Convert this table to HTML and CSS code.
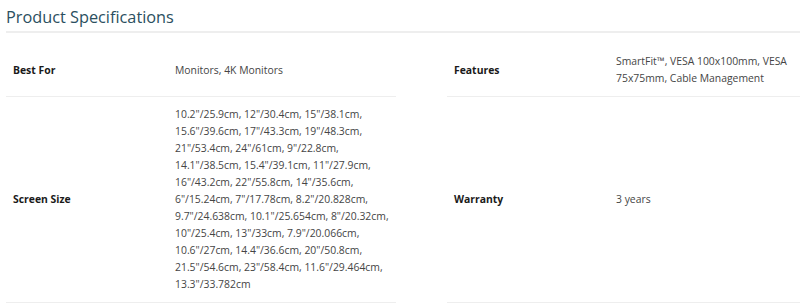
FILE: index.html
```html
<!DOCTYPE html>
<html lang="en">
<head>
<meta charset="utf-8">
<title>Product Specifications</title>
<link rel="stylesheet" href="styles.css">
</head>
<body>
<section class="specs">
  <h2 class="specs-title">Product Specifications</h2>
  <div class="specs-grid">
    <div class="spec">
      <div class="spec-label">Best For</div>
      <div class="spec-value">Monitors, 4K Monitors</div>
    </div>
    <div class="spec">
      <div class="spec-label">Features</div>
      <div class="spec-value">SmartFit™, VESA 100x100mm, VESA 75x75mm, Cable Management</div>
    </div>
    <div class="spec">
      <div class="spec-label">Screen Size</div>
      <div class="spec-value">10.2"/25.9cm, 12"/30.4cm, 15"/38.1cm, 15.6"/39.6cm, 17"/43.3cm, 19"/48.3cm, 21"/53.4cm, 24"/61cm, 9"/22.8cm, 14.1"/38.5cm, 15.4"/39.1cm, 11"/27.9cm, 16"/43.2cm, 22"/55.8cm, 14"/35.6cm, 6"/15.24cm, 7"/17.78cm, 8.2"/20.828cm, 9.7"/24.638cm, 10.1"/25.654cm, 8"/20.32cm, 10"/25.4cm, 13"/33cm, 7.9"/20.066cm, 10.6"/27cm, 14.4"/36.6cm, 20"/50.8cm, 21.5"/54.6cm, 23"/58.4cm, 11.6"/29.464cm, 13.3"/33.782cm</div>
    </div>
    <div class="spec">
      <div class="spec-label">Warranty</div>
      <div class="spec-value">3 years</div>
    </div>
  </div>
</section>
</body>
</html>
```

FILE: styles.css
```css
html, body {
  margin: 0;
  padding: 0;
  background: #ffffff;
  overflow: hidden;
}

body {
  font-family: "Open Sans", "Liberation Sans", sans-serif;
  color: #4a4a4a;
}

.specs {
  padding-left: 6px;
}

.specs-title {
  margin: 7px 0 0 0;
  padding: 0 0 4px 0;
  font-size: 16.3px;
  line-height: 20px;
  font-weight: 400;
  color: #2b4f60;
  border-bottom: 2px solid #eeeeee;
}

.specs-grid {
  margin-top: 11px;
  display: grid;
  grid-template-columns: 390px 1fr;
  column-gap: 51px;
}

.spec {
  display: grid;
  grid-template-columns: 162px 1fr;
  align-items: center;
  padding: 9px 4px 9px 7px;
  border-bottom: 1px solid #eeeeee;
  font-size: 10.4px;
  line-height: 17px;
}

.spec-label {
  font-weight: 700;
  color: #1a1a1a;
}

.spec-value {
  color: #454545;
}
```
